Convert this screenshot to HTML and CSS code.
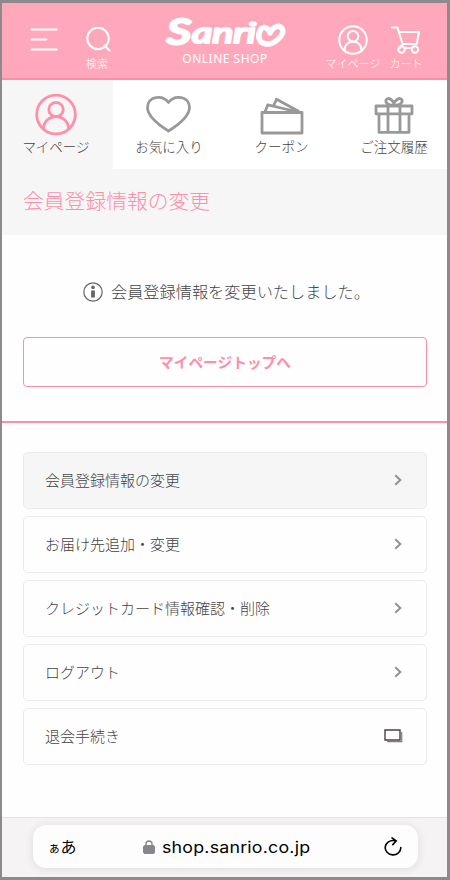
FILE: index.html
```html
<!DOCTYPE html>
<html lang="ja">
<head>
    <meta charset="UTF-8">
    <meta name="viewport" content="width=device-width, initial-scale=1.0">
    <title>会員登録情報の変更</title>
    <link rel="stylesheet" href="styles.css">
</head>
<body>
    <div class="tela">
        <header class="topo">
            <a class="menu">
                <svg width="28" height="24" viewBox="0 0 28 24"><path d="M1.3 1.6h25.4M1.3 11.6h15M1.3 21.6h25.4"/></svg>
            </a>
            <a class="atalho busca">
                <svg width="30" height="30" viewBox="0 0 30 30"><circle cx="14" cy="14.5" r="10.7"/><path d="M20.5 21.5l5 5"/></svg>
                <span>検索</span>
            </a>
            <div class="logo">
                <svg width="124" height="38" viewBox="0 0 124 38">
                    <text class="logo-s" x="4" y="31" textLength="24" lengthAdjust="spacingAndGlyphs">S</text>
                    <text class="logo-letras" x="29" y="30" textLength="64" lengthAdjust="spacingAndGlyphs">anri</text>
                    <path class="logo-coracao" d="M98 16C94.500 21 94.500 29.500 103 31C111 32 121.500 22 119.500 16.500C117 11 110 13 107 20C105.500 15 101 13 98 16"/>
                </svg>
                <span>ONLINE SHOP</span>
            </div>
            <a class="atalho conta">
                <svg width="30" height="30" viewBox="0 0 30 30"><circle cx="15" cy="15" r="13.7"/><circle cx="15" cy="11.200" r="5.300"/><path d="M6.500 25.500c0-12 17-12 17 0"/></svg>
                <span>マイページ</span>
            </a>
            <a class="atalho carrinho">
                <svg width="30" height="30" viewBox="0 0 30 30"><path d="M1 2.500h5.500l5 16.500h14.200L28 7H8M11.500 19l-2.500 4"/><circle cx="10.500" cy="24.500" r="3.200"/><circle cx="24" cy="24.500" r="3.200"/><path d="M13.700 23h7"/></svg>
                <span>カート</span>
            </a>
        </header>

        <nav class="abas">
            <a class="aba ativa">
                <svg width="42" height="42" viewBox="0 0 42 42"><circle cx="21" cy="20.500" r="19.300"/><circle cx="21" cy="15.500" r="7.200"/><path d="M8.500 35c0-16.500 25-16.500 25 0"/></svg>
                <span>マイページ</span>
            </a>
            <a class="aba">
                <svg width="46" height="42" viewBox="0 0 46 42"><path d="M22.500 37C14.500 32 1.500 23 1.500 13.500C1.500 2 16.500 .500 22.500 8.500C28.500 .500 43.500 2 43.500 13.500C43.500 23 30.500 32 22.500 37z"/></svg>
                <span>お気に入り</span>
            </a>
            <a class="aba">
                <svg width="44" height="42" viewBox="0 0 44 42"><path d="M2 18.500h40v20.500H2zM5 18l2.800-7.200L38 18M13.500 12l3-6.700L39 17.500"/></svg>
                <span>クーポン</span>
            </a>
            <a class="aba">
                <svg width="40" height="42" viewBox="0 0 40 42"><path d="M2 12h36v7.800H2zM5 19.800h30v18.500H5zM14 12v26.300M26 12v26.300M20 11.500C15 11.500 11 9 12 6C13.500 2.500 20 5.500 20 11.500C20 5.500 26.500 2.500 28 6C29 9 25 11.500 20 11.500"/></svg>
                <span>ご注文履歴</span>
            </a>
        </nav>

        <h1 class="titulo">会員登録情報の変更</h1>

        <main class="mensagem">
            <p>
                <svg width="20" height="20" viewBox="0 0 20 20"><circle class="aro" cx="10" cy="10" r="9.200"/><circle cx="10" cy="5.400" r="1.800"/><path d="M8.100 8.500h3.800v7H8.100z"/></svg>
                会員登録情報を変更いたしました。
            </p>
            <a class="botao">マイページトップへ</a>
        </main>

        <ul class="lista">
            <li class="item atual">会員登録情報の変更<svg class="seta" width="8" height="12" viewBox="0 0 8 12"><path d="M1.300 1.200L6.300 6l-5 4.800"/></svg></li>
            <li class="item">お届け先追加・変更<svg class="seta" width="8" height="12" viewBox="0 0 8 12"><path d="M1.300 1.200L6.300 6l-5 4.800"/></svg></li>
            <li class="item">クレジットカード情報確認・削除<svg class="seta" width="8" height="12" viewBox="0 0 8 12"><path d="M1.300 1.200L6.300 6l-5 4.800"/></svg></li>
            <li class="item">ログアウト<svg class="seta" width="8" height="12" viewBox="0 0 8 12"><path d="M1.300 1.200L6.300 6l-5 4.800"/></svg></li>
            <li class="item">退会手続き<svg class="janela" width="19" height="14" viewBox="0 0 19 14"><path class="fundo" d="M17.700 3v9.700H3"/><path d="M1 1h15v10H1z"/></svg></li>
        </ul>

        <footer class="navegador">
            <div class="endereco">
                <span class="idioma"><small>ぁ</small>あ</span>
                <span class="url">
                    <svg width="12" height="14" viewBox="0 0 12 14"><rect x=".500" y="5.500" width="11" height="8" rx="1.500"/><path d="M3 6V4a3 3 0 0 1 6 0v2"/></svg>
                    <b>shop.sanrio.co.jp</b>
                </span>
                <svg class="recarregar" width="20" height="20" viewBox="0 0 20 20"><path d="M11.500 3.600A7.800 7.200 0 1 0 17.800 10.500M9 .900l4.200 3L9.800 7.600"/></svg>
            </div>
        </footer>
    </div>
</body>
</html>
```
FILE: styles.css
```css
*{
    box-sizing: border-box;
}

body{
    margin: 0;
    font-family: "Noto Sans CJK JP", sans-serif;
    font-weight: 300;
    color: #444;
}

svg{
    display: block;
    flex: none;
    fill: none;
}

.tela{
    width: 450px;
    height: 880px;
    border: 3px solid #8e8a8c;
    border-left-width: 2px;
    display: flex;
    flex-direction: column;
    background-color: #fefefe;
    overflow: hidden;
}

.topo{
    height: 77px;
    flex: none;
    display: flex;
    align-items: flex-start;
    background-color: #ffa8bb;
    border-bottom: 2px solid #ff8fa9;
    color: white;
    stroke: white;
    stroke-width: 2;
    stroke-linecap: round;
    stroke-linejoin: round;
}

.topo span{
    stroke: none;
    white-space: nowrap;
}

.menu{
    margin: 25px 0 0 28px;
}

.atalho{
    display: flex;
    flex-direction: column;
    align-items: center;
    font-size: 11px;
    line-height: 14px;
    width: 34px;
}

.busca{
    margin: 21px 0 0 22px;
}

.busca svg{
    margin-left: 3px;
}

.busca span{
    margin-top: 2px;
}

.conta{
    margin: 22px 0 0 38px;
    width: 56px;
}

.carrinho{
    margin: 22px 0 0 8px;
}

.conta span, .carrinho span{
    margin-top: 1px;
}

.logo{
    width: 124px;
    margin: 10px 0 0 49px;
    display: flex;
    flex-direction: column;
    align-items: center;
    font-family: "Noto Sans", sans-serif;
    font-size: 12px;
    font-weight: 400;
    line-height: 16px;
    letter-spacing: 0.5px;
}

.logo svg{
    overflow: visible;
}

.logo-s, .logo-letras{
    font-family: Lato, sans-serif;
    font-weight: 400;
    font-style: italic;
    fill: white;
    letter-spacing: 0;
}

.logo-s{
    font-size: 35px;
    stroke-width: 3;
}

.logo-letras{
    font-size: 28px;
    stroke-width: 2.2;
}

.logo-coracao{
    stroke-width: 5.5;
}

.abas{
    height: 89px;
    flex: none;
    display: grid;
    grid-template-columns: 111px 112px 113px 1fr;
    background-color: white;
}

.aba{
    display: flex;
    flex-direction: column;
    align-items: center;
    padding-top: 14px;
    font-size: 13.5px;
    line-height: 20px;
    white-space: nowrap;
    stroke: #999;
    stroke-width: 2.8;
    stroke-linejoin: round;
}

.aba span{
    stroke: none;
}

.aba:last-child{
    padding-left: 3px;
}

.ativa{
    padding-right: 3px;
    background-color: #f6f6f6;
    stroke: #ff8fa9;
}

.titulo{
    margin: 0;
    height: 66px;
    flex: none;
    padding-left: 21px;
    background-color: #f6f6f6;
    color: #ff8fa9;
    font-size: 20.8px;
    font-weight: 300;
    line-height: 63px;
}

.mensagem{
    height: 188px;
    flex: none;
    padding: 44px 20px 0 21px;
    border-bottom: 2px solid #ff8fa9;
}

.mensagem p{
    margin: 0 0 34px;
    padding-left: 60px;
    display: flex;
    align-items: center;
    gap: 8px;
    font-size: 16.2px;
    line-height: 24px;
    white-space: nowrap;
}

.mensagem svg{
    margin-top: 2px;
    fill: #666;
}

.mensagem .aro{
    fill: none;
    stroke: #666;
    stroke-width: 1.2;
}

.botao{
    display: block;
    height: 50px;
    border: 1px solid #ff8fa9;
    border-radius: 4px;
    color: #ff8fa9;
    font-size: 14.7px;
    font-weight: 700;
    line-height: 47px;
    text-align: center;
}

.lista{
    list-style: none;
    margin: 0;
    padding: 29px 20px 0 21px;
    display: flex;
    flex-direction: column;
    gap: 7px;
}

.item{
    height: 57px;
    padding: 0 23px 2px 21px;
    display: flex;
    align-items: center;
    justify-content: space-between;
    border: 1px solid #ebebeb;
    border-radius: 5px;
    font-size: 15px;
}

.atual{
    background-color: #f6f6f6;
}

.seta{
    margin-right: 1px;
    stroke: #929292;
    stroke-width: 2;
}

.janela{
    stroke: #4c4040;
    stroke-width: 1.4;
}

.janela .fundo{
    stroke: #857b7b;
    stroke-width: 1.2;
}

.navegador{
    height: 60px;
    margin-top: auto;
    padding: 7px 29px 0 31px;
    background-color: #f5f3f4;
    border-top: 1px solid #e3e1e2;
}

.endereco{
    height: 43px;
    padding: 0 15px;
    display: flex;
    align-items: center;
    background-color: #fefdfe;
    border-radius: 13px;
    box-shadow: 0 1px 10px rgba(0, 0, 0, 0.1);
    color: black;
}

.idioma{
    width: 95px;
    margin-top: -2px;
    font-size: 16px;
    font-weight: 400;
}

.idioma small{
    font-size: 12.5px;
}

.url{
    display: flex;
    align-items: center;
    gap: 7px;
}

.url svg{
    fill: #88868a;
    stroke: #88868a;
}

.url path{
    fill: none;
    stroke-width: 1.4;
}

/* letras mais largas, como na barra do Safari */
.url b{
    font-family: Inter, sans-serif;
    font-size: 16px;
    font-weight: 400;
    letter-spacing: 0.2px;
    transform: scaleX(1.11);
    transform-origin: left;
}

.recarregar{
    margin-left: auto;
    stroke: black;
    stroke-width: 1.6;
    stroke-linecap: round;
}
```
